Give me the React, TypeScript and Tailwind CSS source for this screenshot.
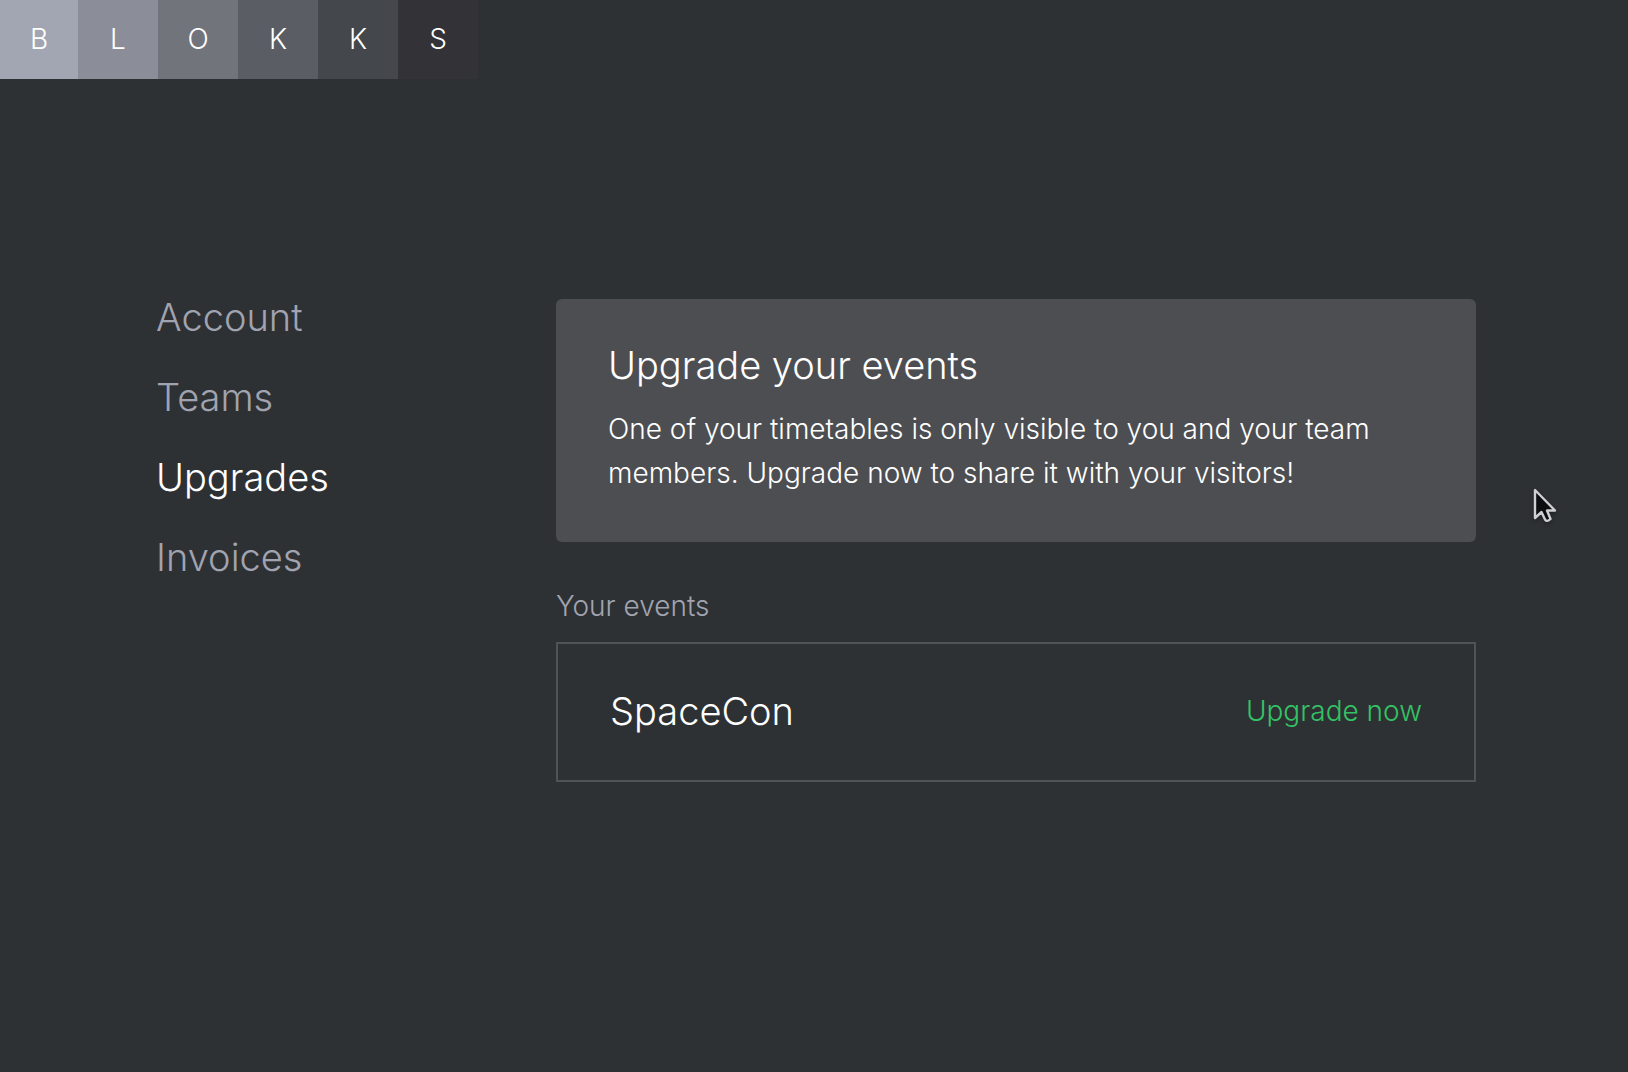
import React from "react";

const tiles = [
  { letter: "B", tone: "w-[78px] bg-[#a2a6b2]" },
  { letter: "L", tone: "w-20 bg-[#8b8e98]" },
  { letter: "O", tone: "w-20 bg-[#72747c]" },
  { letter: "K", tone: "w-20 bg-[#5a5e64]" },
  { letter: "K", tone: "w-20 bg-[#44474b]" },
  { letter: "S", tone: "w-20 bg-[#333337]" },
];

const links = ["Account", "Teams", "Upgrades", "Invoices"];

function Pointer() {
  return (
    <svg
      className="pointer-events-none absolute left-[1533px] top-[487px] h-9 w-6 drop-shadow-[0_2px_2px_rgba(0,0,0,0.35)]"
      viewBox="0 0 24 36"
      aria-hidden="true"
    >
      <path
        d="M2 3V31L8.5 25L12 32.5Q14 35.5 17.5 32L14 23.5H22Z"
        fill="#0c0d0e"
        stroke="#cfcfd2"
        strokeWidth="2.4"
        strokeLinejoin="round"
      />
    </svg>
  );
}

export default function App() {
  return (
    <div className="relative min-h-screen overflow-hidden bg-[#2e3134] font-['Inter',sans-serif] font-light text-white">
      <header>
        <a href="#home" aria-label="Blokks" className="flex h-[79px] w-max text-[28px] leading-[78px]">
          {tiles.map((tile, i) => (
            <span key={i} className={`text-center ${tile.tone}`}>
              {tile.letter}
            </span>
          ))}
        </a>
      </header>

      <main className="flex pt-[220px] pr-[152px] pl-[156px]">
        <nav className="w-[400px] shrink-0" aria-label="Settings">
          <ul className="text-[38px] leading-9">
            {links.map((name) => (
              <li key={name} className="mb-11">
                <a
                  href={`#${name.toLowerCase()}`}
                  aria-current={name === "Upgrades" ? "page" : undefined}
                  className={name === "Upgrades" ? "text-white" : "text-[#a1a4b0]"}
                >
                  {name}
                </a>
              </li>
            ))}
          </ul>
        </nav>

        <div className="min-w-0 flex-1">
          <section className="rounded-md bg-[#4d4e52] px-[52px] pt-[42px] pb-[47px]">
            <h1 className="text-[38px] leading-12">Upgrade your events</h1>
            <p className="mt-[18px] text-[28px] leading-11">
              One of your timetables is only visible to you and your team members. Upgrade now to share it with your
              visitors!
            </p>
          </section>

          <section>
            <h2 className="mt-11 text-[28px] leading-10 text-[#a1a4b0]">Your events</h2>
            <div className="mt-4 flex h-[140px] items-center justify-between border-2 border-[#50525a] px-[52px] pb-[2px]">
              <h3 className="text-[38px] leading-12">SpaceCon</h3>
              <button type="button" className="cursor-pointer text-[28px] leading-12 text-[#34c265]">
                Upgrade now
              </button>
            </div>
          </section>
        </div>
      </main>
      <Pointer />
    </div>
  );
}
